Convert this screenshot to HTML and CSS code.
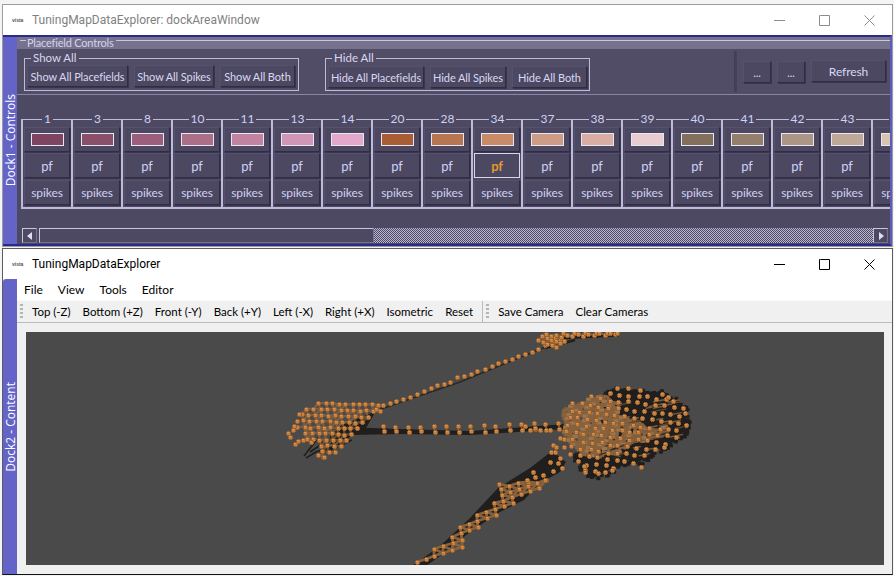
FILE: index.html
```html
<!DOCTYPE html>
<html lang="en">
<head>
<meta charset="utf-8">
<title>TuningMapDataExplorer</title>
<link rel="stylesheet" href="styles.css">
</head>
<body>
<div class="win win-top">
  <header class="titlebar dim">
    <span class="logo">vista</span>
    <span class="title">TuningMapDataExplorer: dockAreaWindow</span>
    <span class="caption">
      <svg viewBox="0 0 11 11" width="11" height="11"><path d="M0 5.5H11"/></svg>
      <svg viewBox="0 0 11 11" width="11" height="11"><path d="M1.5.5H10.5V10.5H.5V.5Z"/></svg>
      <svg viewBox="0 0 11 11" width="11" height="11"><path d="M.5.5L10.5 10.5M10.5.5L.5 10.5"/></svg>
    </span>
  </header>
  <div class="dock dock-controls">
    <div class="dock-label"><span>Dock1 - Controls</span></div>
    <div class="panel">
      <div class="group-head"><span class="tick"></span><span>Placefield Controls</span><span class="rule"></span></div>
      <div class="controls">
        <fieldset class="box box-show">
          <legend>Show All</legend>
          <button class="btn w101">Show All Placefields</button>
          <button class="btn w80">Show All Spikes</button>
          <button class="btn w75">Show All Both</button>
        </fieldset>
        <fieldset class="box box-hide">
          <legend>Hide All</legend>
          <button class="btn w96">Hide All Placefields</button>
          <button class="btn w76">Hide All Spikes</button>
          <button class="btn w75">Hide All Both</button>
        </fieldset>
        <div class="vsep"></div>
        <button class="btn dots">...</button>
        <button class="btn dots">...</button>
        <button class="btn refresh">Refresh</button>
      </div>
      <div class="cols-wrap">
        <div class="cols">
          <fieldset class="col"><legend>1</legend><button class="btn swatch-btn"><span class="swatch" style="background:#7e4560"></span></button><button class="btn cell">pf</button><button class="btn cell">spikes</button></fieldset>
          <fieldset class="col"><legend>3</legend><button class="btn swatch-btn"><span class="swatch" style="background:#8a5069"></span></button><button class="btn cell">pf</button><button class="btn cell">spikes</button></fieldset>
          <fieldset class="col"><legend>8</legend><button class="btn swatch-btn"><span class="swatch" style="background:#9c5f7b"></span></button><button class="btn cell">pf</button><button class="btn cell">spikes</button></fieldset>
          <fieldset class="col"><legend>10</legend><button class="btn swatch-btn"><span class="swatch" style="background:#ac6f88"></span></button><button class="btn cell">pf</button><button class="btn cell">spikes</button></fieldset>
          <fieldset class="col"><legend>11</legend><button class="btn swatch-btn"><span class="swatch" style="background:#c183a0"></span></button><button class="btn cell">pf</button><button class="btn cell">spikes</button></fieldset>
          <fieldset class="col"><legend>13</legend><button class="btn swatch-btn"><span class="swatch" style="background:#d196b5"></span></button><button class="btn cell">pf</button><button class="btn cell">spikes</button></fieldset>
          <fieldset class="col"><legend>14</legend><button class="btn swatch-btn"><span class="swatch" style="background:#e2a9cc"></span></button><button class="btn cell">pf</button><button class="btn cell">spikes</button></fieldset>
          <fieldset class="col"><legend>20</legend><button class="btn swatch-btn"><span class="swatch" style="background:#a85d35"></span></button><button class="btn cell">pf</button><button class="btn cell">spikes</button></fieldset>
          <fieldset class="col"><legend>28</legend><button class="btn swatch-btn"><span class="swatch" style="background:#b87650"></span></button><button class="btn cell">pf</button><button class="btn cell">spikes</button></fieldset>
          <fieldset class="col"><legend>34</legend><button class="btn swatch-btn"><span class="swatch" style="background:#c88b68"></span></button><button class="btn cell cell-on">pf</button><button class="btn cell">spikes</button></fieldset>
          <fieldset class="col"><legend>37</legend><button class="btn swatch-btn"><span class="swatch" style="background:#cc9c87"></span></button><button class="btn cell">pf</button><button class="btn cell">spikes</button></fieldset>
          <fieldset class="col"><legend>38</legend><button class="btn swatch-btn"><span class="swatch" style="background:#d9ada3"></span></button><button class="btn cell">pf</button><button class="btn cell">spikes</button></fieldset>
          <fieldset class="col"><legend>39</legend><button class="btn swatch-btn"><span class="swatch" style="background:#e8ccd0"></span></button><button class="btn cell">pf</button><button class="btn cell">spikes</button></fieldset>
          <fieldset class="col"><legend>40</legend><button class="btn swatch-btn"><span class="swatch" style="background:#83705c"></span></button><button class="btn cell">pf</button><button class="btn cell">spikes</button></fieldset>
          <fieldset class="col"><legend>41</legend><button class="btn swatch-btn"><span class="swatch" style="background:#947f6c"></span></button><button class="btn cell">pf</button><button class="btn cell">spikes</button></fieldset>
          <fieldset class="col"><legend>42</legend><button class="btn swatch-btn"><span class="swatch" style="background:#ab9584"></span></button><button class="btn cell">pf</button><button class="btn cell">spikes</button></fieldset>
          <fieldset class="col"><legend>43</legend><button class="btn swatch-btn"><span class="swatch" style="background:#c0a898"></span></button><button class="btn cell">pf</button><button class="btn cell">spikes</button></fieldset>
          <fieldset class="col"><legend>44</legend><button class="btn swatch-btn"><span class="swatch" style="background:#d8c4b0"></span></button><button class="btn cell">pf</button><button class="btn cell">spikes</button></fieldset>
        </div>
      </div>
      <div class="scrollbar">
        <span class="arrow"><svg viewBox="0 0 6 8" width="6" height="8"><path d="M5 0V8L0 4Z"/></svg></span>
        <span class="thumb"></span>
        <span class="trough"></span>
        <span class="arrow"><svg viewBox="0 0 6 8" width="6" height="8"><path d="M1 0V8L6 4Z"/></svg></span>
      </div>
    </div>
  </div>
</div>
<div class="win win-main">
  <header class="titlebar">
    <span class="logo">vista</span>
    <span class="title">TuningMapDataExplorer</span>
    <span class="caption">
      <svg viewBox="0 0 11 11" width="11" height="11"><path d="M0 5.5H11"/></svg>
      <svg viewBox="0 0 11 11" width="11" height="11"><path d="M1.5.5H10.5V10.5H.5V.5Z"/></svg>
      <svg viewBox="0 0 11 11" width="11" height="11"><path d="M.5.5L10.5 10.5M10.5.5L.5 10.5"/></svg>
    </span>
  </header>
  <div class="dock dock-content">
    <div class="dock-label"><span>Dock2 - Content</span></div>
    <div class="main">
      <nav class="menubar"><span>File</span><span>View</span><span>Tools</span><span>Editor</span></nav>
      <div class="toolbar">
        <span class="handle"></span>
        <span class="tool">Top (-Z)</span><span class="tool">Bottom (+Z)</span><span class="tool">Front (-Y)</span><span class="tool">Back (+Y)</span><span class="tool">Left (-X)</span><span class="tool">Right (+X)</span><span class="tool">Isometric</span><span class="tool">Reset</span>
        <span class="tsep"></span>
        <span class="handle"></span>
        <span class="tool">Save Camera</span><span class="tool">Clear Cameras</span>
      </div>
      <div class="viewport"><canvas id="cloud" width="858" height="233"></canvas></div>
    </div>
  </div>
</div>
<script src="cloud.js"></script>
</body>
</html>
```

FILE: styles.css
```css
* { box-sizing: border-box; }
html, body { margin: 0; height: 576px; overflow: hidden; background: #f4f4f4; }
body { padding-top: 4px; font: 12px Lato, "Noto Sans", sans-serif; color: #000; }

.win { background: #fff; border: 1px solid #9c9c9c; margin: 0 1px 0 2px; overflow: hidden; }
.win-top { height: 243px; }
.win-main { height: 327px; margin-top: 1px; border-color: #5c5c5c; border-bottom-color: #111; }

.titlebar { height: 30px; display: flex; align-items: center; background: #fff; padding-left: 9px; }
.logo { width: 20px; font: bold 5px "Liberation Sans", sans-serif; color: #555; }
.title { font: 12px Roboto, sans-serif; }
.dim .title { color: #7f7f7f; }
.caption { margin-left: auto; display: flex; gap: 34px; padding-right: 17px; }
.caption svg { fill: none; stroke: #000; stroke-width: 1; display: block; }
.dim .caption svg { stroke: #8c8c8c; }

.dock { display: flex; }
.dock-controls { height: 211px; border-top: 2px solid #2b2b8c; border-right: 2px solid #5c5cc0; border-bottom: 2px solid #2b2b8c; background: #5c5cc0; }
.dock-content { height: 295px; }
.dock-label { width: 14px; background: #6363c8; color: #fff; font: 12px "Open Sans", sans-serif; display: flex; align-items: center; justify-content: center; border-radius: 3px 0 0 0; flex: none; }
.dock-label span { writing-mode: vertical-rl; transform: rotate(180deg); white-space: nowrap; }

.panel { flex: 1; min-width: 0; background: #4d4963; color: #d9d8f2; display: flex; flex-direction: column; }
.group-head { height: 12px; background: #76728e; display: flex; align-items: center; font-size: 11px; letter-spacing: -.2px; line-height: 12px; padding-left: 3px; color: #d4d2ea; flex: none; }
.tick { width: 6px; height: 1px; background: #c9c6e0; margin: -5px 1px 0 0; }
.group-head .rule { flex: 1; height: 1px; background: #c9c6e0; margin: -5px 0 0 3px; }

.controls { height: 46px; background: #514d66; border-bottom: 1px solid #8985a8; display: flex; align-items: flex-start; padding: 2px 5px 0 7px; flex: none; }
.box { margin: 0; min-width: 0; border: 1px solid #bdbbd8; padding: 0 0 0 2px; display: flex; gap: 6px; align-items: flex-start; font-size: 11.5px; flex: none; }
.box legend { padding: 0 2px; margin-left: 4px; line-height: 14px; }
.box-show { width: 275px; height: 40px; }
.box-hide { width: 265px; height: 40px; margin-left: 26px; }
.box-hide .btn { margin-top: 1px; }

.btn { font: inherit; font-size: 11px; letter-spacing: -.1px; color: #d9d8f2; background: #4c4862; border: 1px solid; border-color: #55516e #2f2c44 #2f2c44 #55516e; box-shadow: 1px 1px 0 #3a3652; padding: 0; white-space: nowrap; height: 22px; flex: none; }
.w101 { width: 101px; } .w80 { width: 80px; } .w75 { width: 75px; } .w96 { width: 96px; } .w76 { width: 76px; }

.vsep { width: 3px; height: 41px; margin: 0 6px 0 144px; background: #45415c; border-left: 1px solid #403c56; flex: none; }
.dots { width: 28px; margin-top: 10px; margin-right: 6px; }
.refresh { width: 75px; margin-top: 9px; font-size: 12px; }

.cols-wrap { overflow: hidden; flex: none; height: 114px; margin-top: 17px; margin-left: 4px; }
.cols { display: flex; width: 900px; }
.col { margin: 0; min-width: 0; width: 50px; flex: none; height: 97px; border: 0; border-left: 2px solid #bdbbd8; border-bottom: 2px solid #bdbbd8; border-top: 1px solid #bdbbd8; padding: 0 0 0 1px; display: flex; flex-direction: column; }
.col legend { margin: 0 auto; padding: 0 2px; font-size: 12px; line-height: 14px; color: #cfd0f2; }
.col .btn { width: 46px; }
.swatch-btn { height: 25px; margin-top: 1px; display: flex; align-items: center; justify-content: center; }
.swatch { display: block; width: 33px; height: 13px; border: 1px solid #e8e6f2; }
.cell { height: 25px; margin-top: 1px; }
.col .cell { color: #cfd0f2; font-size: 12px; }
.col .cell:last-child { margin-top: 2px; }
.col .cell:nth-of-type(2) { font-size: 13px; }
.col .cell.cell-on { border: 1px solid #d8d6ea; box-shadow: none; color: #e19a2a; font-weight: bold; }

.scrollbar { margin-top: 2px; display: flex; align-items: stretch; height: 15px; flex: none; padding: 0 2px 0 5px; }
.arrow { width: 15px; flex: none; border: 1px solid #c9c6e0; border-right-color: #77738f; border-bottom-color: #77738f; background: #4d4963; display: flex; align-items: center; justify-content: center; }
.arrow svg { fill: #dfdcf5; }
.thumb { width: 335px; margin-left: 2px; background: #4d4963; border: 1px solid #c9c6e0; border-right-color: #77738f; border-bottom-color: #77738f; }
.trough { flex: 1; background: repeating-conic-gradient(#bab7d6 0 25%, #4d4963 0 50%) 0 0 / 2px 2px; }

.main { flex: 1; min-width: 0; background: #f0f0f0; display: flex; flex-direction: column; }
.menubar { background: #fff; height: 21px; display: flex; gap: 15px; padding-left: 7px; align-items: center; flex: none; }
.toolbar { height: 23px; background: #f0f0f0; border-top: 1px solid #f8f8f8; border-bottom: 1px solid #bcbcbc; display: flex; align-items: center; padding-left: 3px; flex: none; }
.handle { width: 3px; height: 15px; background: repeating-linear-gradient(#b4b4b4 0 2px, transparent 2px 4px); flex: none; margin-right: 3px; }
.tool { padding: 0 6px; white-space: nowrap; font-size: 11.5px; }
.tsep { width: 1px; height: 21px; background: #bcbcbc; margin: 0 3px; flex: none; }
.viewport { padding: 9px 6px 8px 9px; flex: none; }
#cloud { display: block; width: 858px; height: 233px; background: #4a4a4a; }
```

FILE: cloud.js
```js
(function () {
  var ctx = document.getElementById('cloud').getContext('2d');
  var OX = 26, OY = 332;
  var seed = 12345;
  var SHADOW = '#201f1d', TAN = '#86623f', TAN2 = '#9a7550';
  function rnd() { seed = (seed * 1664525 + 1013904223) >>> 0; return seed / 4294967296; }
  function trace(pts) {
    ctx.beginPath();
    pts.forEach(function (p, i) { if (i) ctx.lineTo(p[0] - OX, p[1] - OY); else ctx.moveTo(p[0] - OX, p[1] - OY); });
  }
  function poly(pts, color) { ctx.fillStyle = color; trace(pts); ctx.closePath(); ctx.fill(); }
  function stroke(pts, color, w) { ctx.strokeStyle = color; ctx.lineWidth = w; trace(pts); ctx.stroke(); }
  function inside(p, pts) {
    var c = false;
    for (var i = 0, j = pts.length - 1; i < pts.length; j = i++) {
      if ((pts[i][1] > p[1]) !== (pts[j][1] > p[1]) &&
          p[0] < (pts[j][0] - pts[i][0]) * (p[1] - pts[i][1]) / (pts[j][1] - pts[i][1]) + pts[i][0]) c = !c;
    }
    return c;
  }
  function links(set, maxD, color, w) {
    for (var i = 0; i < set.length; i++) {
      for (var j = i + 1; j < set.length; j++) {
        var dx = set[i][0] - set[j][0], dy = set[i][1] - set[j][1];
        if (dx * dx + dy * dy < maxD * maxD) stroke([set[i], set[j]], color, w);
      }
    }
  }
  function grid(ox, oy, ax, ay, bx, by, ni, nj, outline, jitter) {
    var out = [];
    for (var j = 0; j < nj; j++) {
      for (var i = 0; i < ni; i++) {
        var p = [ox + i * ax + j * bx + (rnd() - .5) * jitter, oy + i * ay + j * by + (rnd() - .5) * jitter];
        if (inside(p, outline)) out.push(p);
      }
    }
    return out;
  }
  var all = [];

  /* ---- left fan ---- */
  var fanOutline = [[296,428],[303,408],[313,403],[337,402],[378,402],[381,413],[360,424],[348,443],[333,454],[323,458],[313,444],[303,436]];
  poly([[345,427],[400,429],[470,431],[566,424],[566,429],[470,435],[400,434],[352,435]], SHADOW);
  poly([[335,428],[376,411],[366,428],[345,440],[325,446]], SHADOW);
  stroke([[304,456],[318,438],[330,450],[352,440],[316,452],[306,458]], SHADOW, 1.6);
  stroke([[310,452],[322,444],[325,452],[340,443]], SHADOW, 1.6);
  var fan = grid(286, 402, 6.6, .2, 1.2, 6.1, 15, 10, fanOutline, 1.2);
  links(fan, 8, 'rgba(150,108,68,.6)', 2.2);
  all = all.concat(fan);
  all = all.concat([[290,437],[288,433],[293,430],[294,426],[297,421],[295,444],[298,441],[303,440],[311,442],[299,414],[318,455],[324,457]]);

  /* ---- upper strand and its top end ---- */
  stroke([[378,410],[460,382],[548,346]], '#2a2927', 1.4);
  var strand = [];
  for (var i = 0; i < 27; i++) {
    var u = i / 26;
    strand.push([376 + u * 176 + (rnd() - .5), 408.5 - u * 65 + (rnd() - .5) * 2.2]);
  }
  all = all.concat(strand);
  stroke([[545,348],[575,340]], SHADOW, 2.5);
  stroke([[560,338],[618,335]], SHADOW, 3);
  var top = [];
  for (i = 0; i < 5; i++) {
    top.push([538 + i * 4.5, 337 + i * 1.8 + 3]);
    top.push([542 + i * 4.5, 335 + i * 1.8 + 1]);
    top.push([546 + i * 4.5, 333 + i * 1.8 + 1]);
  }
  for (i = 0; i < 12; i++) {
    top.push([556 + i * 5.4, 335.5 - i * .25 + (i % 2 ? 1.5 : -.5)]);
    if (i % 2) top.push([558 + i * 5.4, 332.5]);
  }
  links(top, 6, 'rgba(140,100,64,.8)', 2);
  all = all.concat(top);

  /* ---- middle strand: two rows ---- */
  var mid = [];
  for (i = 0; i < 15; i++) {
    var x = 383 + i * 12.5 + (rnd() - .5) * 2;
    var base = 429.5 - Math.max(0, x - 470) * .035;
    mid.push([x, base - 3 + (rnd() - .5) * 2]);
    mid.push([x + 1, base + 2 + (rnd() - .5) * 2]);
  }
  links(mid, 7, '#9a6e44', 1.4);
  all = all.concat(mid);

  /* ---- right cluster ---- */
  var blob = [[562,408],[583,398],[617,388],[643,391],[667,393],[686,410],[686,427],[681,436],[663,448],[640,461],[613,468],[597,476],[583,471],[572,458],[562,446],[562,425]];
  var shade = [[600,396],[617,388],[630,392],[643,391],[667,393],[676,404],[686,410],[686,427],[681,436],[668,442],[663,448],[640,461],[627,460],[613,468],[597,476],[583,471],[574,455],[600,440]];
  poly(shade, SHADOW);
  /* jagged edge along the shadow outline */
  for (i = 0; i < shade.length - 1; i++) {
    for (var s = 0; s < 12; s++) {
      var a = shade[i], b = shade[i + 1], f = rnd();
      ctx.fillStyle = SHADOW;
      ctx.fillRect(a[0] + (b[0] - a[0]) * f - OX - 3 + rnd() * 5, a[1] + (b[1] - a[1]) * f - OY - 3 + rnd() * 5, 4, 3);
    }
  }
  var tanOutline = [[561,410],[583,399],[604,394],[618,400],[622,416],[640,420],[655,428],[676,424],[660,438],[635,442],[622,454],[596,460],[576,452],[562,436]];
  var tanMesh = grid(548, 385, 5.2, .7, -.9, 4.2, 26, 22, tanOutline, 1.5);
  links(tanMesh, 6.5, TAN, 3.6);
  tanMesh.forEach(function (p, k) {
    if (k % 3 === 0) { ctx.fillStyle = TAN2; ctx.fillRect(p[0] - OX - 2, p[1] - OY - 1, 5, 3); }
  });
  /* tan stripes through the shadow */
  for (i = 0; i < 46; i++) {
    var sx = 618 + rnd() * 58, sy = 400 + rnd() * 58;
    if (!inside([sx, sy], shade)) continue;
    var len = 5 + rnd() * 11;
    stroke([[sx, sy], [sx + len, sy - len * .2]], i % 3 ? '#7d5c3d' : '#5f4630', 1.4);
  }
  /* a few dark slots in the tan, lower right */
  for (i = 0; i < 14; i++) {
    var ex = 596 + rnd() * 50, ey = 441 + rnd() * 20;
    stroke([[ex, ey], [ex + 6, ey - 1.5]], '#2e2a25', 1.2);
  }
  var cluster = grid(548, 385, 9, 1.1, -1.5, 7.2, 17, 14, blob, 2.6);
  all = all.concat(cluster);
  all = all.concat([[617,388],[628,388],[640,390],[662,394],[668,397],[685,413],[686,425],[664,447],[641,467],[598,473],[585,472],[584,466],[612,470],[553,445],[555,452],[564,447],[560,438],[550,430],[540,430],[535,428],[530,430],[525,426]]);

  /* ---- diagonal branch ---- */
  poly([[552,451],[566,462],[560,472],[540,483],[524,500],[500,512],[470,532],[440,556],[426,566],[412,566],[440,546],[470,518],[498,488],[530,468]], SHADOW);
  var diag = [[499,484],[509,486],[518,483],[528,482],[537,483],[546,480],[501,489],[510,492],[519,489],[528,486],[539,488],[502,495],[512,497],[521,494],[530,491],
    [494,503],[503,501],[513,503],[504,506],[495,509],[477,515],[486,512],[496,515],[477,521],[487,518],
    [460,527],[469,524],[478,527],[469,530],[461,533],[452,537],[462,540],[453,543],[462,547],[443,546],[434,549],[452,550],[443,553],[434,556],[426,559],[417,562]];
  links(diag, 11, TAN, 2.8);
  all = all.concat(diag);
  all = all.concat([[550,462],[543,475],[560,458],[535,477],[533,472],[545,480],[527,480],[553,471],[562,468],[558,463],[551,452],[556,447]]);

  /* ---- spheres ---- */
  all.forEach(function (p) {
    var x = Math.round(p[0] - OX), y = Math.round(p[1] - OY);
    if (y < 0) return;
    ctx.fillStyle = '#96602f';
    ctx.fillRect(x - 2, y - 1, 5, 3);
    ctx.fillRect(x - 1, y - 2, 3, 5);
    ctx.fillStyle = '#c5803f';
    ctx.fillRect(x - 1, y - 1, 3, 3);
    ctx.fillStyle = '#d9965a';
    ctx.fillRect(x - 1, y - 1, 2, 1);
  });
})();
```
